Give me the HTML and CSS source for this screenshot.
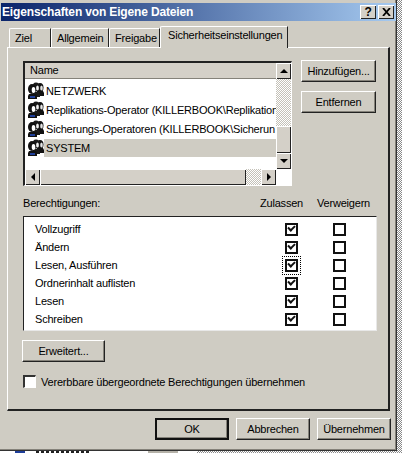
FILE: index.html
```html
<!DOCTYPE html>
<html lang="de">
<head>
    <meta charset="UTF-8">
    <title>Eigenschaften von Eigene Dateien</title>
    <link rel="stylesheet" href="styles.css">
</head>
<body>
    <svg class="defs" width="0" height="0">
        <symbol id="group" viewBox="0 0 17 17">
            <!-- rear head -->
            <ellipse cx="13" cy="5.500" rx="3.500" ry="4.500" fill="#111"/>
            <ellipse cx="14.500" cy="6" rx="1.300" ry="2.500" fill="#e4e4e4"/>
            <path d="M10 9h6l1 2v3h-7z" fill="#111"/>
            <!-- middle head -->
            <ellipse cx="9" cy="5" rx="3.500" ry="4.500" fill="#1a1a1a"/>
            <ellipse cx="10.500" cy="6" rx="1.400" ry="2.600" fill="#f0f0f0"/>
            <path d="M6 10h6l1 2v3H6z" fill="#1a1a1a"/>
            <!-- front head -->
            <ellipse cx="5" cy="7" rx="4" ry="5" fill="#111"/>
            <ellipse cx="6.500" cy="8" rx="1.800" ry="3" fill="#fff"/>
            <path d="M2 12h7l1 2v3H1v-3z" fill="#111"/>
            <path d="M3 14h5v2H3z" fill="#1f3f9a"/>
        </symbol>
    </svg>

    <div class="window">
        <div class="titlebar">
            <span class="title">Eigenschaften von Eigene Dateien</span>
            <div class="title-btn">?</div>
            <div class="title-btn close">
                <svg width="9" height="8" viewBox="0 0 9 8"><path d="M1 0l7 8M8 0L1 8" stroke="#000" stroke-width="1.800" fill="none"/></svg>
            </div>
        </div>

        <div class="tabs">
            <div class="tab tab-ziel">Ziel</div>
            <div class="tab tab-allgemein">Allgemein</div>
            <div class="tab tab-freigabe">Freigabe</div>
            <div class="tab active">Sicherheitseinstellungen</div>
        </div>

        <div class="panel">
            <div class="users-row">
                <div class="list">
                    <div class="list-main">
                        <div class="list-body">
                            <div class="list-head">Name</div>
                            <div class="user"><svg class="icon"><use href="#group"/></svg><span>NETZWERK</span></div>
                            <div class="user"><svg class="icon"><use href="#group"/></svg><span>Replikations-Operator (KILLERBOOK\Replikation</span></div>
                            <div class="user"><svg class="icon"><use href="#group"/></svg><span>Sicherungs-Operatoren (KILLERBOOK\Sicherun</span></div>
                            <div class="user selected"><svg class="icon"><use href="#group"/></svg><span>SYSTEM</span></div>
                        </div>
                        <div class="vscroll">
                            <div class="sb-btn"><i class="arrow up"></i></div>
                            <div class="track v-top"></div>
                            <div class="thumb v-thumb"></div>
                            <div class="sb-btn"><i class="arrow down"></i></div>
                        </div>
                    </div>
                    <div class="hscroll">
                        <div class="sb-btn"><i class="arrow left"></i></div>
                        <div class="thumb h-thumb"></div>
                        <div class="track h-rest"></div>
                        <div class="sb-btn"><i class="arrow right"></i></div>
                    </div>
                </div>
                <div class="side-buttons">
                    <div class="btn side">Hinzufügen...</div>
                    <div class="btn side">Entfernen</div>
                </div>
            </div>

            <div class="perm-head">
                <span class="perm-title">Berechtigungen:</span>
                <span class="col-allow">Zulassen</span>
                <span class="col-deny">Verweigern</span>
            </div>

            <div class="perms">
                <div class="perm"><span class="perm-name">Vollzugriff</span><span class="cell"><i class="check on"></i></span><span class="cell"><i class="check"></i></span></div>
                <div class="perm"><span class="perm-name">Ändern</span><span class="cell"><i class="check on"></i></span><span class="cell"><i class="check"></i></span></div>
                <div class="perm"><span class="perm-name">Lesen, Ausführen</span><span class="cell"><i class="focus"><i class="check on"></i></i></span><span class="cell"><i class="check"></i></span></div>
                <div class="perm"><span class="perm-name">Ordnerinhalt auflisten</span><span class="cell"><i class="check on"></i></span><span class="cell"><i class="check"></i></span></div>
                <div class="perm"><span class="perm-name">Lesen</span><span class="cell"><i class="check on"></i></span><span class="cell"><i class="check"></i></span></div>
                <div class="perm"><span class="perm-name">Schreiben</span><span class="cell"><i class="check on"></i></span><span class="cell"><i class="check"></i></span></div>
            </div>

            <div class="btn advanced">Erweitert...</div>

            <div class="inherit">
                <i class="check sunken"></i>
                <span>Vererbbare übergeordnete Berechtigungen übernehmen</span>
            </div>
        </div>

        <div class="footer">
            <div class="btn foot default">OK</div>
            <div class="btn foot">Abbrechen</div>
            <div class="btn foot">Übernehmen</div>
        </div>
    </div>

    <!-- what is left of the window behind the dialog -->
    <div class="behind">
        <i class="behind-icon"></i>
        <i class="behind-name"></i>
        <i class="behind-btn"></i>
    </div>
</body>
</html>
```

FILE: styles.css
```css
/* General Styles */
html, body {
    height: 100%;
}

body {
    margin: 0;
    overflow: hidden;
    background-color: #f2f2f2;
    background-image: repeating-conic-gradient(#8a8a8a 0 25%, #ffffff 0 50%);
    background-size: 2px 2px;
    color: #000;
    font-family: "Liberation Sans", Arial, sans-serif;
    font-size: 11px;
    letter-spacing: -0.2px;
}

.defs {
    display: block;
    height: 0;
}

.window {
    box-sizing: border-box;
    width: 397px;
    height: 451px;
    background-color: #cfccc3;
    border-right: 1px solid #333;
    border-bottom: 1px solid #333;
    box-shadow: inset -1px -1px 0 #85827a;
    padding-top: 3px;
}

/* Title bar */
.titlebar {
    display: flex;
    align-items: center;
    height: 18px;
    margin-left: 1px;
    padding: 0 2px 0 1px;
    gap: 2px;
    background: linear-gradient(90deg, #0a246a, #a6caf0);
    color: #fff;
}

.title {
    flex: 1;
    font-weight: bold;
    font-size: 12px;
    letter-spacing: -0.15px;
}

.title-btn {
    display: flex;
    align-items: center;
    justify-content: center;
    width: 16px;
    height: 14px;
    background-color: #d4d0c8;
    color: #000;
    font-weight: bold;
    font-size: 12px;
    box-shadow: inset 1px 1px 0 #fff, inset -1px -1px 0 #222;
}

/* Tabs */
.tabs {
    display: flex;
    align-items: flex-end;
    height: 26px;
    padding-left: 9px;
}

.tab {
    box-sizing: border-box;
    height: 19px;
    padding: 3px 0 0 5px;
    border-left: 1px solid #fff;
    border-top: 1px solid #fff;
    border-right: 1px solid #222;
    border-top-left-radius: 2px;
}

.tab-ziel { width: 42px; }
.tab-allgemein { width: 58px; }
.tab-freigabe { width: 51px; }

.tab.active {
    width: 128px;
    height: 22px;
    margin-bottom: -1px;
    padding-top: 2px;
    padding-left: 7px;
    position: relative;
    background-color: #cfccc3;
}

/* Panel */
.panel {
    box-sizing: border-box;
    width: 383px;
    height: 364px;
    margin-left: 7px;
    padding: 13px 0 0 15px;
    border-top: 1px solid #fff;
    border-left: 1px solid #fff;
    border-right: 2px solid #222;
    border-bottom: 2px solid #222;
}

.users-row {
    display: flex;
    gap: 9px;
}

.list {
    box-sizing: border-box;
    width: 269px;
    height: 125px;
    border-top: 2px solid #222;
    border-left: 2px solid #222;
    border-right: 1px solid #fff;
    border-bottom: 1px solid #fff;
    background-color: #fff;
}

.list-main {
    display: flex;
    height: 106px;
}

.list-body {
    flex: 1;
    min-width: 0;
    overflow: hidden;
}

.list-head {
    box-sizing: border-box;
    height: 16px;
    padding: 1px 0 0 5px;
    margin-bottom: 2px;
    background-color: #d4d0c8;
    box-shadow: inset 0 -1px 0 #85827a;
}

.user {
    display: flex;
    align-items: center;
    height: 19px;
    white-space: nowrap;
    letter-spacing: -0.2px;
}

.user span {
    padding: 2px 0 2px 2px;
    height: 14px;
    line-height: 14px;
}

.user.selected span {
    flex: 1;
    background-color: #cfccc3;
}

.icon {
    flex: none;
    width: 17px;
    height: 17px;
    margin-left: 2px;
}

/* Scrollbars */
.vscroll {
    flex: none;
    display: flex;
    flex-direction: column;
    width: 15px;
}

.hscroll {
    display: flex;
    height: 16px;
}

.sb-btn, .thumb {
    box-sizing: border-box;
    flex: none;
    background-color: #d4d0c8;
    box-shadow: inset 1px 1px 0 #fff, inset -1px -1px 0 #222;
}

.sb-btn {
    display: flex;
    align-items: center;
    justify-content: center;
    width: 15px;
    height: 16px;
}

.track {
    background-image: repeating-conic-gradient(#ffffff 0 25%, #c4c1b8 0 50%);
    background-size: 2px 2px;
}

.v-top { height: 47px; }
.v-thumb { height: 27px; }
.h-thumb { width: 206px; height: 16px; }
.h-rest { width: 15px; }

.arrow {
    display: block;
    width: 0;
    height: 0;
    border: 4px solid transparent;
}

.arrow.up { border-top: 0; border-bottom-color: #000; }
.arrow.down { border-bottom: 0; border-top-color: #000; }
.arrow.left { border-left: 0; border-right-color: #000; }
.arrow.right { border-right: 0; border-left-color: #000; }

/* Buttons */
.btn {
    box-sizing: border-box;
    display: flex;
    align-items: center;
    justify-content: center;
    background-color: #cfccc3;
    border-top: 1px solid #fff;
    border-left: 1px solid #fff;
    border-right: 1px solid #222;
    border-bottom: 1px solid #222;
    box-shadow: inset -1px -1px 0 #85827a;
}

.side-buttons {
    display: flex;
    flex-direction: column;
    gap: 9px;
    margin-top: -1px;
}

.side {
    width: 75px;
    height: 22px;
}

/* Permissions */
.perm-head {
    display: flex;
    align-items: center;
    height: 15px;
    margin-top: 9px;
}

.perm-title { width: 237px; }
.col-allow { width: 57px; }

.perms {
    box-sizing: border-box;
    width: 354px;
    height: 115px;
    margin-top: 6px;
    padding-top: 3px;
    background-color: #fff;
    border-top: 1px solid #222;
    border-left: 1px solid #222;
    border-right: 1px solid #e8e8e8;
    border-bottom: 1px solid #e8e8e8;
}

.perm {
    display: flex;
    align-items: center;
    height: 18px;
}

.perm-name {
    width: 233px;
    padding-left: 11px;
}

.cell {
    display: flex;
    width: 31px;
    padding-left: 17px;
}

.check {
    box-sizing: border-box;
    display: block;
    position: relative;
    flex: none;
    width: 13px;
    height: 13px;
    background-color: #fff;
    border: 2px solid #111;
}

.check.on::after {
    content: "";
    position: absolute;
    left: 1px;
    top: 0;
    width: 5px;
    height: 3px;
    border-left: 2px solid #111;
    border-bottom: 2px solid #111;
    transform: rotate(-45deg);
}

.check.sunken {
    border-width: 2px 1px 1px 2px;
    border-color: #333 #fff #fff #333;
}

.focus {
    display: block;
    margin: -3px;
    padding: 2px;
    border: 1px dotted #000;
}

.advanced {
    width: 83px;
    height: 22px;
    margin-top: 9px;
    margin-left: -1px;
}

.inherit {
    display: flex;
    align-items: center;
    gap: 5px;
    margin-top: 13px;
}

/* Footer */
.footer {
    display: flex;
    gap: 7px;
    padding: 7px 0 0 155px;
}

.foot {
    width: 74px;
    height: 22px;
}

.foot.default {
    border: 2px solid #111;
}

/* Behind the dialog */
.behind {
    display: flex;
    align-items: flex-start;
    height: 2px;
    padding-left: 15px;
    width: 182px;
    background-color: #fff;
}

.behind-icon {
    width: 10px;
    height: 2px;
    background-color: #1f3f9a;
}

.behind-name {
    width: 54px;
    height: 2px;
    margin-left: 11px;
    background-image: repeating-linear-gradient(90deg, #222 0 3px, #fff 3px 5px);
}

.behind-btn {
    width: 30px;
    height: 2px;
    margin-left: 58px;
    background-color: #b5b2a9;
}
```
